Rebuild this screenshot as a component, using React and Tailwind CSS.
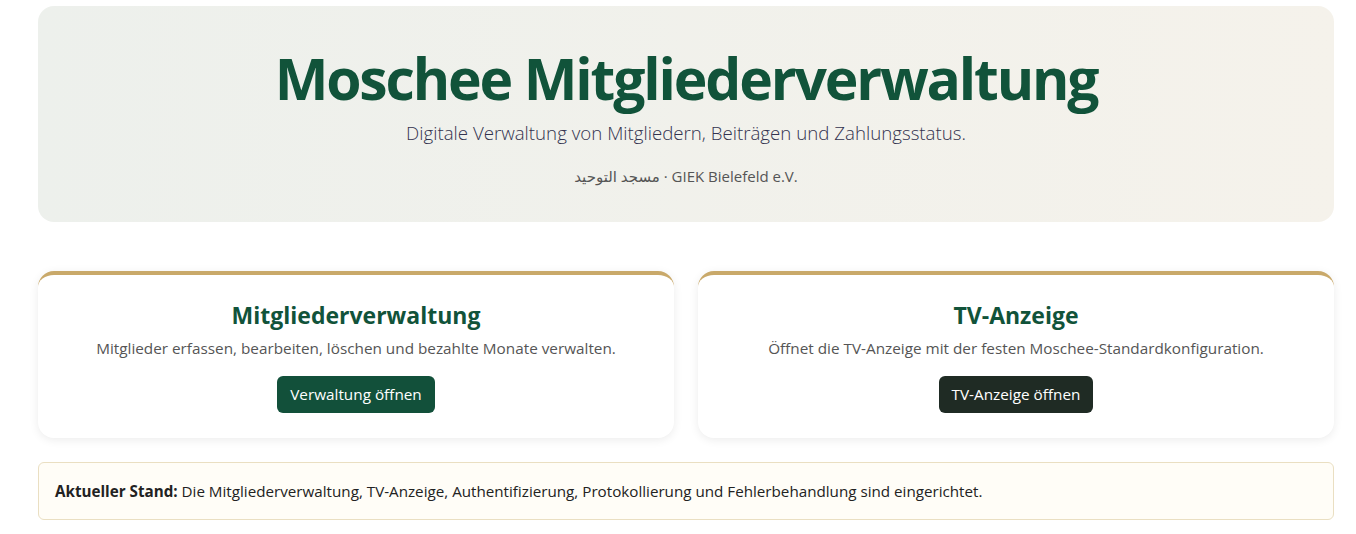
export default function App() {
  return (
    <div className="min-h-screen bg-white pl-[38px] pr-[22px] pt-[6px]" style={{ fontFamily: '"Open Sans", "Noto Sans", sans-serif' }}>
      {/* Hero */}
      <header className="rounded-2xl bg-gradient-to-r from-[#edf0ec] to-[#f5f2eb] h-[216px] flex flex-col items-center pt-[36px]">
        <h1 className="text-[57px] leading-[72px] font-bold text-[#11533a] tracking-[-2.15px]">Moschee Mitgliederverwaltung</h1>
        <p className="mt-[5px] text-[18.7px] text-[#33334f] font-light">Digitale Verwaltung von Mitgliedern, Beiträgen und Zahlungsstatus.</p>
        <p className="mt-[18px] text-[15px] text-[#555]">
          <span style={{ fontFamily: '"Noto Sans", "DejaVu Sans", sans-serif' }}>مسجد التوحيد</span> · GIEK Bielefeld e.V.
        </p>
      </header>

      {/* Cards */}
      <section className="mt-[49px] grid grid-cols-2 gap-6">
        <Card
          title="Mitgliederverwaltung"
          text="Mitglieder erfassen, bearbeiten, löschen und bezahlte Monate verwalten."
          button="Verwaltung öffnen"
          btnClass="bg-[#12503a]"
        />
        <Card
          title="TV-Anzeige"
          text="Öffnet die TV-Anzeige mit der festen Moschee-Standardkonfiguration."
          button="TV-Anzeige öffnen"
          btnClass="bg-[#1f2b24]"
        />
      </section>

      {/* Status */}
      <div className="mt-6 rounded-md border border-[#eadfc2] bg-[#fffdf7] h-[58px] flex items-center px-4 text-[15.2px] text-[#222]">
        <p>
          <strong className="font-bold">Aktueller Stand:</strong> Die Mitgliederverwaltung, TV-Anzeige, Authentifizierung, Protokollierung und Fehlerbehandlung sind eingerichtet.
        </p>
      </div>
    </div>
  )
}

function Card({ title, text, button, btnClass }) {
  return (
    <div className="rounded-2xl border-t-4 border-[#c9a96a] bg-white shadow-[0_2px_10px_rgba(0,0,0,0.08)] h-[167px] flex flex-col items-center pt-[24px]">
      <h2 className="text-[23px] leading-[32px] font-bold text-[#11533a]">{title}</h2>
      <p className="mt-[6px] text-[15.3px] text-[#555]">{text}</p>
      <button className={`mt-[16px] h-[37px] px-[13px] rounded-md text-white text-[15.3px] ${btnClass}`}>{button}</button>
    </div>
  )
}
